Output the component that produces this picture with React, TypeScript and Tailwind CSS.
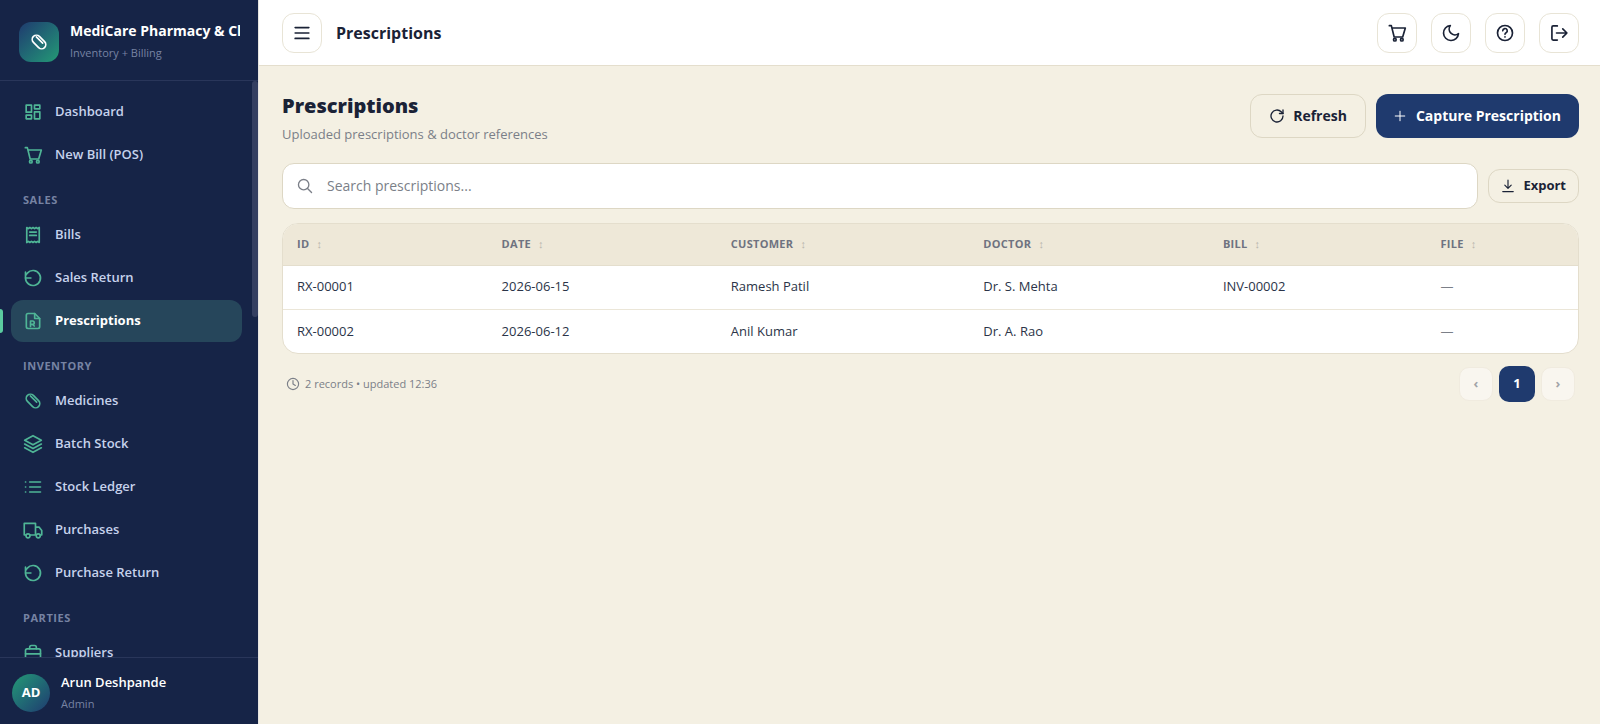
import type { ReactNode } from "react";

const icons: Record<string, ReactNode> = {
  dashboard: (
    <path d="M3.8 3.8h6.4v8.4H3.8zM13.8 3.8h6.4v4.4h-6.4zM3.8 15.8h6.4v4.4H3.8zM13.8 11.8h6.4v8.4h-6.4z" />
  ),
  cart: (
    <>
      <path d="M2.8 3.2h2.4l3.4 13.6h10.2L22 6H6" />
      <circle cx="9.4" cy="20" r="1.6" />
      <circle cx="17.8" cy="20" r="1.6" />
    </>
  ),
  receipt: (
    <>
      <path d="M4.5 3l1.9 1.4L8.2 3l1.9 1.4L12 3l1.9 1.4L15.8 3l1.8 1.4L19.5 3v18l-1.9-1.4-1.8 1.4-1.9-1.4L12 21l-1.9-1.4L8.2 21l-1.8-1.4L4.5 21z" />
      <path d="M8 8.5h8M8 12.5h8" />
    </>
  ),
  returns: (
    <>
      <path d="M3 12a9 9 0 1 0 2.2-5.9L3.4 8.2" />
      <path d="M3 5v7h6.5" />
    </>
  ),
  rx: (
    <>
      <path d="M14 3H6a2 2 0 0 0-2 2v14a2 2 0 0 0 2 2h12a2 2 0 0 0 2-2V9z" />
      <path d="M14 3v6h6" />
      <path d="M9 18.5V12h2.5a2 2 0 0 1 0 4H9M11.5 16l2 2" />
    </>
  ),
  pill: (
    <>
      <rect x="2.6" y="7" width="18.8" height="10" rx="5" transform="rotate(45 12 12)" />
      <path d="M8.8 5.8l7.6 7.6" />
    </>
  ),
  layers: (
    <>
      <path d="M12 2L2 7.5l10 5.5 10-5.5z" />
      <path d="M2 12l10 5.5L22 12" />
      <path d="M2 16.5L12 22l10-5.5" />
    </>
  ),
  list: (
    <>
      <path d="M8 6h13M8 12h13M8 18h13" />
      <path d="M3 6h.2M3 12h.2M3 18h.2" />
    </>
  ),
  truck: (
    <>
      <path d="M3.6 18H1.5V4H15v14H8.4M15 8.5h4.2l3.3 4.2V18h-1.8M15.9 18H15" />
      <circle cx="6" cy="19" r="2.4" />
      <circle cx="18.3" cy="19" r="2.4" />
    </>
  ),
  briefcase: (
    <>
      <rect x="3" y="7" width="18" height="14" rx="2" />
      <path d="M8 7V5a2 2 0 0 1 2-2h4a2 2 0 0 1 2 2v2M3 13h18" />
    </>
  ),
  menu: <path d="M3.8 5.5h16.4M3.8 12h16.4M3.8 18.5h16.4" />,
  moon: <path d="M21 12.8A9 9 0 1 1 11.2 3 7 7 0 0 0 21 12.8z" />,
  help: (
    <>
      <circle cx="12" cy="12" r="9" />
      <path d="M9.3 9.3a2.7 2.7 0 1 1 4 2.4c-.9.5-1.3 1-1.3 1.9M12 16.6v.3" />
    </>
  ),
  logout: <path d="M10 3.5H5A1.5 1.5 0 0 0 3.5 5v14A1.5 1.5 0 0 0 5 20.5h5M9 12h12.5M16.5 7l5 5-5 5" />,
  refresh: (
    <>
      <path d="M21 12a9 9 0 1 1-2.7-6.4L21 8.3" />
      <path d="M21 3v5.3h-5.3" />
    </>
  ),
  plus: <path d="M12 2.5v19M2.5 12h19" />,
  download: <path d="M12 2v13.5M6.5 10.5L12 16l5.5-5.5M3 21.5h18" />,
  search: (
    <>
      <circle cx="10" cy="10" r="7.8" />
      <path d="M15.8 15.8l6 6" />
    </>
  ),
  clock: (
    <>
      <circle cx="12" cy="12" r="9.6" />
      <path d="M12 6v6l4 2.5" />
    </>
  ),
};

function Icon({ name, className }: { name: string; className?: string }) {
  return (
    <svg
      viewBox="0 0 24 24"
      fill="none"
      stroke="currentColor"
      strokeWidth={2}
      strokeLinecap="round"
      strokeLinejoin="round"
      aria-hidden="true"
      className={`shrink-0 ${className ?? "size-5"}`}
    >
      {icons[name]}
    </svg>
  );
}

const navGroups = [
  {
    title: "",
    items: [
      { label: "Dashboard", icon: "dashboard" },
      { label: "New Bill (POS)", icon: "cart" },
    ],
  },
  {
    title: "Sales",
    items: [
      { label: "Bills", icon: "receipt" },
      { label: "Sales Return", icon: "returns" },
      { label: "Prescriptions", icon: "rx", active: true },
    ],
  },
  {
    title: "Inventory",
    items: [
      { label: "Medicines", icon: "pill" },
      { label: "Batch Stock", icon: "layers" },
      { label: "Stock Ledger", icon: "list" },
      { label: "Purchases", icon: "truck" },
      { label: "Purchase Return", icon: "returns" },
    ],
  },
  {
    title: "Parties",
    items: [{ label: "Suppliers", icon: "briefcase" }],
  },
];

const columns = [
  { label: "ID", width: "w-[15.8%]" },
  { label: "Date", width: "w-[17.7%]" },
  { label: "Customer", width: "w-[19.5%]" },
  { label: "Doctor", width: "w-[18.5%]" },
  { label: "Bill", width: "w-[16.8%]" },
  { label: "File", width: "w-[11.7%]" },
];

const rows = [
  ["RX-00001", "2026-06-15", "Ramesh Patil", "Dr. S. Mehta", "INV-00002"],
  ["RX-00002", "2026-06-12", "Anil Kumar", "Dr. A. Rao", ""],
];

const topActions = [
  { label: "New bill", icon: "cart" },
  { label: "Dark mode", icon: "moon" },
  { label: "Help", icon: "help" },
  { label: "Log out", icon: "logout" },
];

function IconButton({ label, icon }: { label: string; icon: string }) {
  return (
    <button
      type="button"
      aria-label={label}
      className="flex size-10 items-center justify-center rounded-xl border border-[#e8e4d6] bg-white text-[#1a2236]"
    >
      <Icon name={icon} />
    </button>
  );
}

function Sidebar() {
  return (
    <aside className="flex w-[259px] shrink-0 flex-col border-r border-[#e6e4df] bg-[#162447]">
      <div className="flex h-[81px] shrink-0 items-center gap-[11px] border-b border-[#29365a] pt-1 pr-[18px] pl-[19px]">
        <div className="flex size-10 shrink-0 items-center justify-center rounded-xl bg-linear-135 from-[#1f3a6e] to-[#249a74] text-white">
          <Icon name="pill" />
        </div>
        <div className="min-w-0">
          <div className="overflow-hidden text-sm leading-[22px] font-bold whitespace-nowrap text-white">
            MediCare Pharmacy &amp; Clinic
          </div>
          <div className="text-[11px] leading-[22px] text-[#7683a3]">Inventory + Billing</div>
        </div>
      </div>

      <div className="relative min-h-0 flex-1 overflow-hidden">
        <nav className="flex flex-col gap-px px-[11px] pt-[10px] pr-4">
          {navGroups.map((group) => (
            <div key={group.title} className="flex flex-col gap-px">
              {group.title && (
                <div className="px-3 pt-[14px] pb-1 text-[11px] leading-[18px] font-bold tracking-wider text-[#7683a3] uppercase">
                  {group.title}
                </div>
              )}
              {group.items.map((item) => (
                <a
                  key={item.label}
                  href="#"
                  className={`relative flex h-[42px] items-center gap-3 rounded-xl px-3 text-[13px] ${
                    item.active ? "bg-[#26465b] font-bold text-white" : "font-semibold text-[#c6d2ec]"
                  }`}
                >
                  {item.active && (
                    <span className="absolute top-[9px] -left-[11px] h-6 w-[3px] rounded-r bg-[#5bcba0]" />
                  )}
                  <Icon name={item.icon} className="size-5 text-[#4fb596]" />
                  {item.label}
                </a>
              ))}
            </div>
          ))}
        </nav>
        <div className="absolute top-0 right-0 h-[236px] w-1.5 rounded-full bg-[#343f61]" />
      </div>

      <div className="flex h-[67px] shrink-0 items-center gap-[11px] border-t border-[#29365a] px-3 pt-1">
        <div className="flex size-[38px] items-center justify-center rounded-full bg-linear-135 from-[#249a74] to-[#1f3a6e] text-[13px] font-bold text-white">
          AD
        </div>
        <div>
          <div className="text-[13px] leading-[22px] font-semibold text-white">Arun Deshpande</div>
          <div className="text-[11px] leading-[22px] text-[#7683a3]">Admin</div>
        </div>
      </div>
    </aside>
  );
}

export default function App() {
  return (
    <div className="flex h-screen bg-[#f4f0e3] font-['Open_Sans','Noto_Sans',sans-serif] text-[#1a2236]">
      <Sidebar />

      <div className="flex min-w-0 flex-1 flex-col">
        <header className="flex h-[66px] shrink-0 items-center justify-between border-b border-[#e4decd] bg-white pr-[21px] pl-[23px]">
          <div className="flex items-center gap-[14px]">
            <IconButton label="Toggle menu" icon="menu" />
            <div className="text-base font-bold">Prescriptions</div>
          </div>
          <div className="flex gap-[14px]">
            {topActions.map((action) => (
              <IconButton key={action.label} label={action.label} icon={action.icon} />
            ))}
          </div>
        </header>

        <main className="flex-1 pt-7 pr-[21px] pl-[23px]">
          <div className="flex items-start justify-between">
            <div>
              <h1 className="text-xl leading-6 font-extrabold">Prescriptions</h1>
              <p className="mt-1.5 text-[13px] leading-5 text-[#7b7f88]">
                Uploaded prescriptions &amp; doctor references
              </p>
            </div>
            <div className="flex gap-[10px] text-sm font-bold">
              <button
                type="button"
                className="flex h-11 items-center gap-2 rounded-xl border border-[#ddd7c4] px-[18px]"
              >
                <Icon name="refresh" className="size-4" />
                Refresh
              </button>
              <button
                type="button"
                className="flex h-11 items-center gap-[10px] rounded-xl bg-[#1f3a6e] px-[18px] text-white"
              >
                <Icon name="plus" className="size-3" />
                Capture Prescription
              </button>
            </div>
          </div>

          <div className="mt-[19px] flex items-center gap-[10px]">
            <label className="flex h-[46px] flex-1 items-center gap-[14px] rounded-xl border border-[#ddd7c4] bg-white px-[14px] text-[#7b7f88]">
              <Icon name="search" className="size-4" />
              <input
                type="text"
                aria-label="Search prescriptions"
                placeholder="Search prescriptions..."
                className="w-full text-sm outline-none placeholder:text-[#7b7f88]"
              />
            </label>
            <button
              type="button"
              className="flex h-[34px] items-center gap-2 rounded-xl border border-[#ddd7c4] px-3 text-[13px] font-bold"
            >
              <Icon name="download" className="size-[14px]" />
              Export
            </button>
          </div>

          <div className="mt-[14px] overflow-hidden rounded-2xl border border-[#e4decd] bg-white">
            <table className="w-full table-fixed text-left">
              <thead className="bg-[#eee8d8] text-[11px] text-[#6f7380] uppercase">
                <tr className="h-[41px] border-b border-[#e4decd]">
                  {columns.map((col) => (
                    <th key={col.label} className={`px-[14px] font-bold tracking-wide ${col.width}`}>
                      {col.label}
                      <span className="ml-1 font-normal text-[#b9b6ad]"> ↕</span>
                    </th>
                  ))}
                </tr>
              </thead>
              <tbody className="text-[13px] text-[#2b3448]">
                {rows.map((row) => (
                  <tr key={row[0]} className="h-11 border-b border-[#ebe6d8] last:border-b-0">
                    {row.map((cell, i) => (
                      <td key={i} className="px-[14px]">
                        {cell}
                      </td>
                    ))}
                    <td className="px-[14px] text-[#7b7f88]">—</td>
                  </tr>
                ))}
              </tbody>
            </table>
          </div>

          <div className="mt-3 flex items-center justify-between px-1 text-[#7b7f88]">
            <div className="flex items-center gap-[5px] text-[11px]">
              <Icon name="clock" className="size-[14px]" />
              2 records • updated 12:36
            </div>
            <div className="flex items-center gap-[6px] text-[13px] font-bold">
              <button
                type="button"
                disabled
                aria-label="Previous page"
                className="size-[34px] rounded-[10px] border border-[#f0ebdf] bg-[#f9f6ef] text-[#a2a4a8]"
              >
                ‹
              </button>
              <button type="button" className="size-9 rounded-[10px] bg-[#1f3a6e] text-white">
                1
              </button>
              <button
                type="button"
                disabled
                aria-label="Next page"
                className="size-[34px] rounded-[10px] border border-[#f0ebdf] bg-[#f9f6ef] text-[#a2a4a8]"
              >
                ›
              </button>
            </div>
          </div>
        </main>
      </div>
    </div>
  );
}
